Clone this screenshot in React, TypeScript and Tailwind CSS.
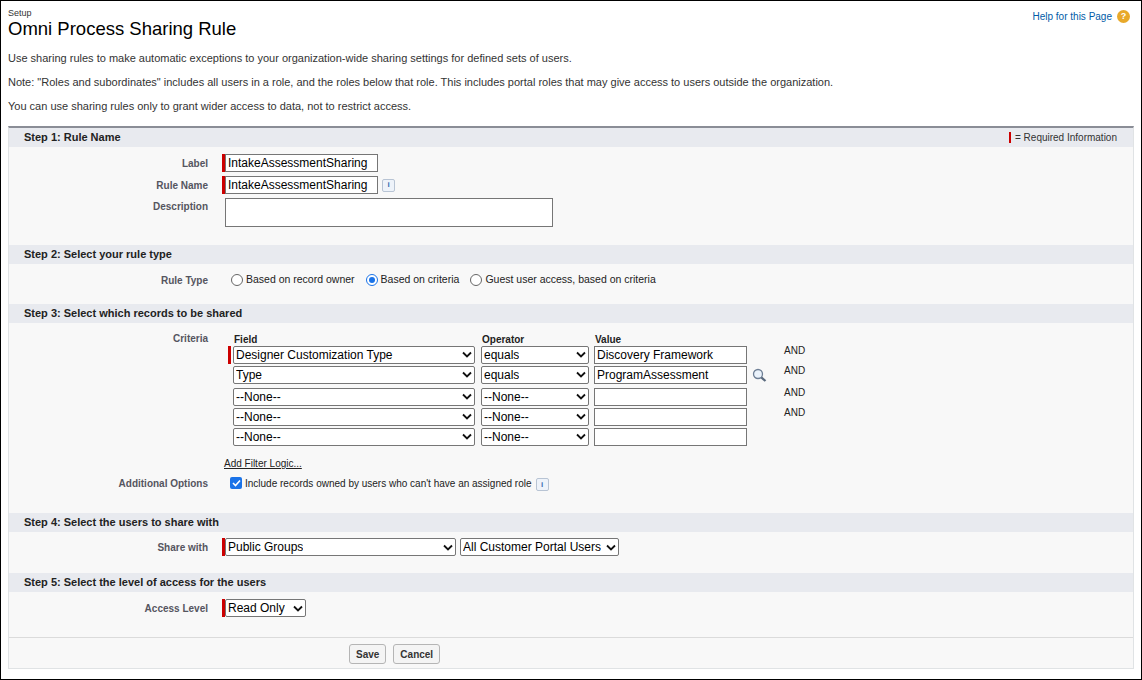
import React from "react";

const F = { fontFamily: '"Liberation Sans", Arial, sans-serif' };

function Chevron() {
  return (
    <svg width="10" height="7" viewBox="0 0 10 7" className="shrink-0">
      <path d="M1 1.5 L5 5.5 L9 1.5" stroke="#111" strokeWidth="1.8" fill="none" />
    </svg>
  );
}

function Select({ w, text, req }: { w: number; text: string; req?: boolean }) {
  return (
    <div className="flex h-[18px] shrink-0" style={{ width: w }}>
      {req && <div className="w-[3px] bg-[#c00] shrink-0" />}
      <div className="flex-1 flex items-center justify-between border border-[#767676] bg-white pl-[2px] pr-[2px] text-[12px] text-black rounded-[2px] min-w-0">
        <span className="whitespace-nowrap overflow-hidden">{text}</span>
        <Chevron />
      </div>
    </div>
  );
}

function Input({ w, text }: { w: number; text?: string }) {
  return (
    <div className="h-[18px] border border-[#767676] bg-white px-[2px] text-[12px] leading-[16px] text-black shrink-0" style={{ width: w }}>
      {text}
    </div>
  );
}

function Info() {
  return (
    <div className="w-[13px] h-[13px] border border-[#b8c4d4] rounded-[2px] bg-[#eef3fa] flex items-center justify-center text-[8px] font-bold text-[#3a6ab0] leading-none">
      i
    </div>
  );
}

function Header({ t, right }: { t: string; right?: React.ReactNode }) {
  return (
    <div className="h-[19px] bg-[#e8eaef] flex items-center justify-between pl-[15px] pr-[16px]">
      <span className="text-[11px] font-bold text-[#222]">{t}</span>
      {right}
    </div>
  );
}

function Label({ t }: { t: string }) {
  return <div className="w-[213px] shrink-0 text-right pr-[14px] text-[10px] font-bold text-[#55555f]">{t}</div>;
}

function Radio({ on }: { on?: boolean }) {
  return (
    <div className={`w-[12px] h-[12px] rounded-full border ${on ? "border-[#1a73e8]" : "border-[#666]"} bg-white flex items-center justify-center shrink-0`}>
      {on && <div className="w-[6px] h-[6px] rounded-full bg-[#1a73e8]" />}
    </div>
  );
}

export default function App() {
  const rows = [
    { f: "Designer Customization Type", o: "equals", v: "Discovery Framework", req: true, and: true },
    { f: "Type", o: "equals", v: "ProgramAssessment", lookup: true, and: true },
    { f: "--None--", o: "--None--", v: "", and: true },
    { f: "--None--", o: "--None--", v: "", and: true },
    { f: "--None--", o: "--None--", v: "" },
  ];
  return (
    <div style={F} className="w-[1142px] h-[680px] border border-black bg-white relative overflow-hidden text-[#222]">
      <div className="flex justify-between pl-[7px] pr-[11px] pt-[7px]">
        <div>
          <div className="text-[9px] text-[#333] leading-[10px]">Setup</div>
          <div className="text-[18.5px] leading-[22px] text-black">Omni Process Sharing Rule</div>
        </div>
        <div className="flex items-center gap-[5px] pt-[1px] h-[16px]">
          <span className="text-[10px] text-[#015ba7]">Help for this Page</span>
          <div className="w-[13px] h-[13px] rounded-full bg-[#e8a92a] text-white text-[9px] font-bold flex items-center justify-center">?</div>
        </div>
      </div>
      <div className="pl-[7px] text-[11px] text-[#333] mt-[11px] flex flex-col gap-[10px] leading-[14px]">
        <div>Use sharing rules to make automatic exceptions to your organization-wide sharing settings for defined sets of users.</div>
        <div>Note: "Roles and subordinates" includes all users in a role, and the roles below that role. This includes portal roles that may give access to users outside the organization.</div>
        <div>You can use sharing rules only to grant wider access to data, not to restrict access.</div>
      </div>

      <div className="mx-[7px] mt-[13px] border-t-[2px] border-t-[#8a8d96] bg-[#f8f8f8] border-x border-b border-[#e0e3e5] h-[543px]">
        <Header
          t="Step 1: Rule Name"
          right={
            <div className="flex items-center gap-[4px] text-[10px] text-[#333]">
              <div className="w-[2px] h-[11px] bg-[#c00]" />
              <span>= Required Information</span>
            </div>
          }
        />
        <div className="pt-[7px] flex flex-col gap-[4px]">
          <div className="flex items-center h-[18px]">
            <Label t="Label" />
            <div className="w-[3px] h-[18px] bg-[#c00]" />
            <Input w={153} text="IntakeAssessmentSharing" />
          </div>
          <div className="flex items-center h-[18px]">
            <Label t="Rule Name" />
            <div className="w-[3px] h-[18px] bg-[#c00]" />
            <Input w={153} text="IntakeAssessmentSharing" />
            <div className="ml-[4px]"><Info /></div>
          </div>
          <div className="flex items-start h-[29px]">
            <div className="pt-[1px]"><Label t="Description" /></div>
            <div className="ml-[3px] w-[328px] h-[29px] border border-[#767676] bg-white" />
          </div>
        </div>

        <div className="mt-[18px]"><Header t="Step 2: Select your rule type" /></div>
        <div className="flex items-center h-[32px] text-[10.5px] text-[#222]">
          <Label t="Rule Type" />
          <div className="flex items-center gap-[3px] ml-[9px]">
            <Radio /><span className="mr-[8px]">Based on record owner</span>
            <Radio on /><span className="mr-[8px]">Based on criteria</span>
            <Radio /><span>Guest user access, based on criteria</span>
          </div>
        </div>

        <div className="mt-[8px]"><Header t="Step 3: Select which records to be shared" /></div>
        <div className="flex pt-[7px]">
          <div className="pt-[1px]"><Label t="Criteria" /></div>
          <div className="flex flex-col ml-[8px]">
            <div className="flex text-[10px] font-bold text-[#222] h-[12px] ml-[4px] mt-[2px]">
              <span className="w-[248px]">Field</span>
              <span className="w-[113px]">Operator</span>
              <span>Value</span>
            </div>
            <div className="flex flex-col gap-[1px] mt-[1px]">
              {rows.map((r, i) => (
                <div key={i} className="flex items-center h-[19px] gap-[5px]" style={{ marginTop: i === 2 ? 2 : 0 }}>
                  <div className="w-[3px] shrink-0 ml-[-2px]">
                    {r.req && <div className="w-[3px] h-[18px] bg-[#c00]" />}
                  </div>
                  <div className="ml-[-3px]"><Select w={242} text={r.f} /></div>
                  <div className="ml-[1px]"><Select w={108} text={r.o} /></div>
                  <Input w={153} text={r.v} />
                  <div className="w-[16px] flex items-center">
                    {r.lookup && (
                      <svg width="15" height="14" viewBox="0 0 15 14">
                        <circle cx="6" cy="6" r="4.5" fill="#eaf2fb" stroke="#6e7f95" strokeWidth="1.3" />
                        <path d="M9.3 9.3 L13.5 13" stroke="#5a6a7e" strokeWidth="2.2" />
                      </svg>
                    )}
                  </div>
                  {r.and && <span className="text-[10px] text-[#222] ml-[11px] self-start -mt-[2px]">AND</span>}
                </div>
              ))}
            </div>
            <div className="mt-[10px] ml-[-6px] text-[10px] underline text-[#222]">Add Filter Logic...</div>
          </div>
        </div>
        <div className="flex items-center mt-[4px] h-[16px]">
          <Label t="Additional Options" />
          <div className="ml-[8px] w-[12px] h-[12px] rounded-[2px] bg-[#1a73e8] flex items-center justify-center">
            <svg width="9" height="8" viewBox="0 0 9 8"><path d="M1 4 L3.5 6.5 L8 1.5" stroke="#fff" strokeWidth="1.6" fill="none" /></svg>
          </div>
          <span className="ml-[3px] text-[10px] text-[#222]">Include records owned by users who can't have an assigned role</span>
          <div className="ml-[4px] mt-[3px]"><Info /></div>
        </div>

        <div className="mt-[22px]"><Header t="Step 4: Select the users to share with" /></div>
        <div className="flex items-center h-[32px] mt-[-1px]">
          <Label t="Share with" />
          <Select w={234} text="Public Groups" req />
          <div className="ml-[4px]"><Select w={159} text="All Customer Portal Users" /></div>
        </div>

        <div className="mt-[10px]"><Header t="Step 5: Select the level of access for the users" /></div>
        <div className="flex items-center h-[32px]">
          <Label t="Access Level" />
          <Select w={84} text="Read Only" req />
        </div>

        <div className="mt-[13px] border-t border-[#dbdbdb] flex gap-[7px] pt-[6px] pl-[340px]">
          <div className="h-[20px] px-[6px] border border-[#b5b5b5] rounded-[3px] bg-[#f4f4f4] text-[10px] font-bold text-[#333] flex items-center">Save</div>
          <div className="h-[20px] px-[6px] border border-[#b5b5b5] rounded-[3px] bg-[#f4f4f4] text-[10px] font-bold text-[#333] flex items-center">Cancel</div>
        </div>
      </div>
    </div>
  );
}
